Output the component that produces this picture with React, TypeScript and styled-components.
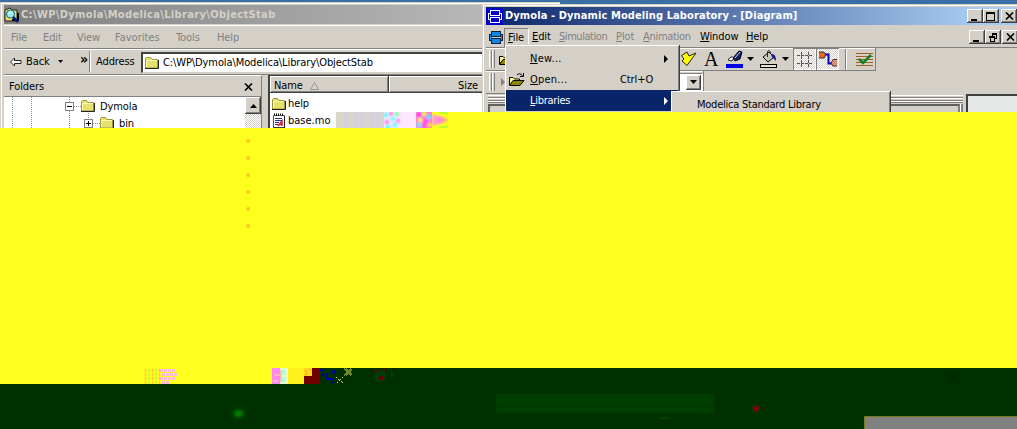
import React from 'react';
import styled, { createGlobalStyle, css } from 'styled-components';

const Global = createGlobalStyle`
  html, body { margin: 0; padding: 0; overflow: hidden; }
  * { box-sizing: border-box; }
  svg { display: block; flex: none; }
`;

const face = '#d4d0c8';
const raised = css`
  background: ${face};
  box-shadow: inset -1px -1px #404040, inset 1px 1px #fff, inset -2px -2px #808080;
`;

const Screen = styled.main`
  position: relative;
  width: 1017px;
  height: 429px;
  overflow: hidden;
  font: 11px/14px "DejaVu Sans Condensed", "DejaVu Sans", sans-serif;
  color: #000;
  display: flex;
  flex-direction: column;
`;
const Desktop = styled.section`
  position: relative;
  height: 128px;
  flex: none;
  background: #3a6ea5;
  overflow: hidden;
`;
const Label = styled.span<{ $w?: number; $ls?: number; $off?: boolean; $ml?: number }>`
  flex: none;
  white-space: pre;
  width: ${p => (p.$w ? p.$w + 'px' : 'auto')};
  margin-left: ${p => p.$ml ?? 0}px;
  letter-spacing: ${p => p.$ls ?? -0.1}px;
  color: ${p => (p.$off ? '#808080' : 'inherit')};
`;
const Key = styled.span`
  text-decoration: underline;
  text-underline-offset: 1px;
  text-decoration-thickness: 1px;
`;
const Spacer = styled.span<{ $w?: number }>`
  flex: ${p => (p.$w === undefined ? '1' : 'none')};
  width: ${p => p.$w ?? 0}px;
`;

/* Explorer window */
const Explorer = styled.div`
  position: absolute;
  left: 0;
  top: 2px;
  width: 560px;
  height: 140px;
  background: ${face};
  padding: 3px 4px 0;
  box-shadow: inset 1px 1px ${face}, inset 2px 2px #fff, inset -1px 0 #404040;
`;
const ExplorerTitle = styled.div`
  height: 19px;
  display: flex;
  align-items: center;
  background: linear-gradient(90deg, #808080, #c0c0c0);
  color: #d4d0c8;
  font-weight: 700;
`;
const ExplorerMenu = styled.div`
  margin-top: 1px;
  height: 24px;
  display: flex;
  align-items: center;
  padding: 2px 0 0 7px;
  border-top: 1px solid #fff;
  border-bottom: 1px solid #808080;
`;
const AddressBar = styled.div`
  height: 23px;
  display: flex;
  align-items: center;
  border-top: 1px solid #fff;
  padding: 1px 0 0 6px;
`;
const Chevron = styled.span`
  width: 14px;
  margin: -6px 0 0 17px;
  font-size: 14px;
  font-weight: 700;
`;
const AddressDivider = styled.i`
  width: 2px;
  height: 21px;
  margin-right: 3px;
  margin-left: -5px;
  border-left: 1px solid #808080;
  border-right: 1px solid #fff;
`;
const AddressField = styled.div`
  display: flex;
  align-items: center;
  flex: 1;
  height: 21px;
  margin-top: 1px;
  margin-left: 1px;
  padding-left: 1px;
  background: #fff;
  border: 1px solid #404040;
  border-width: 2px 0 1px 2px;
  border-bottom-color: #d4d0c8;
`;
const Panes = styled.div`
  display: flex;
  height: 60px;
  margin-top: 2px;
  border-top: 1px solid #808080;
`;
const FolderPane = styled.div`
  width: 258px;
  border-top: 1px solid #fff;
  border-right: 1px solid #808080;
`;
const FolderHead = styled.div`
  height: 21px;
  display: flex;
  align-items: center;
  padding: 1px 8px 0 5px;
  border-bottom: 1px solid #808080;
`;
const TreeArea = styled.div`
  display: flex;
  background: #fff;
  height: 36px;
`;
const Tree = styled.div`
  width: 241px;
`;
const Scroll = styled.div`
  flex: 1;
  background: repeating-conic-gradient(#fff 0 25%, ${face} 0 50%) 0 0 / 2px 2px;
`;
const ScrollButton = styled.div`
  ${raised}
  height: 17px;
  display: grid;
  place-items: center;
`;
const ListPane = styled.div`
  margin-left: 6px;
  flex: 1;
  background: #fff;
  border-left: 2px solid #404040;
  border-top: 1px solid #404040;
`;
const Columns = styled.div`
  display: flex;
  height: 17px;
  margin-bottom: 2px;
`;
const Column = styled.div<{ $w: number; $right?: boolean }>`
  ${raised}
  width: ${p => p.$w}px;
  display: flex;
  align-items: center;
  padding: 2px 7px 0 4px;
  justify-content: ${p => (p.$right ? 'flex-end' : 'flex-start')};
`;
const FileRow = styled.div`
  display: flex;
  align-items: center;
  height: 17px;
  padding-left: 1px;
  gap: 1px;
`;

/* Modeling application window */
const App2 = styled.div`
  position: absolute;
  left: 482px;
  top: 4px;
  width: 540px;
  height: 130px;
  background: ${face};
  padding: 3px 0 0 4px;
  box-shadow: inset 1px 1px ${face}, inset 2px 2px #fff;
`;
const AppTitle = styled.div`
  height: 18px;
  width: 531px;
  display: flex;
  align-items: center;
  background: linear-gradient(90deg, #0a246a, #a6caf0 92%);
  color: #fff;
  font-weight: 700;
`;
const WinButton = styled.span<{ $ml?: number }>`
  ${raised}
  width: 16px;
  height: 14px;
  margin-left: ${p => p.$ml ?? 0}px;
  display: grid;
  place-items: center;
  flex: none;
`;
const AppMenu = styled.div`
  height: 23px;
  width: 532px;
  display: flex;
  align-items: center;
  padding: 2px 0 0 1px;
  border-bottom: 1px solid #808080;
`;
const OpenMenuItem = styled.div`
  width: 25px;
  height: 19px;
  margin: 1px 3px 0 0;
  padding: 2px 0 0 3px;
  letter-spacing: -0.1px;
  border: 1px solid #808080;
  border-right-color: #fff;
`;
const ToolRow = styled.div<{ $w: number; $h: number }>`
  width: ${p => p.$w}px;
  height: ${p => p.$h}px;
  display: flex;
  align-items: center;
  padding-left: 3px;
  border: 1px solid #808080;
  border-width: 0 1px 1px 0;
  box-shadow: inset 0 1px #fff;
`;
const Grip = styled.i`
  width: 6px;
  height: 18px;
  flex: none;
  border: solid #808080;
  border-width: 0 1px 0 0;
  background: linear-gradient(90deg, #fff 1px, ${face} 1px 2px, #808080 2px 3px, #fff 3px 4px, ${face} 4px);
`;
const Toggle = styled.span`
  width: 23px;
  height: 22px;
  display: grid;
  place-items: center;
  background: repeating-conic-gradient(#fff 0 25%, ${face} 0 50%) 0 0 / 2px 2px;
  box-shadow: inset 1px 1px #808080, inset -1px -1px #fff;
`;
const ToolDivider = styled.i`
  width: 2px;
  height: 21px;
  margin: 0 9px 0 6px;
  border-left: 1px solid #808080;
  border-right: 1px solid #fff;
`;
const Combo = styled.span`
  width: 24px;
  height: 19px;
  background: #fff;
  display: flex;
  justify-content: flex-end;
  border: 1px solid #808080;
  border-color: #808080 #fff #fff;
  padding: 1px;
`;
const ComboButton = styled.span`
  ${raised}
  width: 15px;
  display: grid;
  place-items: center;
`;
const Docks = styled.div`
  display: flex;
  height: 30px;
`;
const Dock = styled.div`
  width: 477px;
  padding: 1px 0 0 2px;
`;
const DockGrip = styled.div`
  height: 8px;
  background: linear-gradient(#fff 1px, ${face} 1px 2px, #808080 2px 3px, #fff 3px 4px, ${face} 4px 5px, #808080 5px 6px, #fff 6px 7px, #808080 7px);
`;
const DockBody = styled.div`
  margin-top: 1px;
  width: 472px;
  height: 18px;
  border: 2px solid #606060;
  border-right-color: #808080;
  box-shadow: 1px 0 #fff, 3px 0 #808080;
`;
const Canvas = styled.div`
  flex: 1;
  margin-left: 3px;
  background: #e6e8e8;
  border: solid #404040;
  border-width: 2px 0 0 2px;
`;

const Menu = styled.div`
  position: absolute;
  left: 505px;
  top: 45px;
  width: 175px;
  height: 70px;
  padding: 3px 2px 0 1px;
  ${raised}
`;
const MenuItem = styled.div<{ $on?: boolean }>`
  height: 21px;
  display: flex;
  align-items: center;
  padding-left: 2px;
  background: ${p => (p.$on ? '#0a246a' : 'transparent')};
  color: ${p => (p.$on ? '#fff' : '#000')};
`;
const Submenu = styled.div`
  position: absolute;
  left: 671px;
  top: 91px;
  width: 220px;
  height: 30px;
  padding: 7px 0 0 26px;
  ${raised}
`;

/* Corrupted bands */
const YellowTongue = styled.div`
  position: absolute;
  left: 336px;
  right: 0;
  top: 112px;
  height: 16px;
  background: #ffff1e;
`;
const YellowBand = styled.section`
  height: 240px;
  flex: none;
  background: #ffff1e;
`;
const GreenBand = styled.section`
  height: 61px;
  flex: none;
  background: #003000;
`;

const Tri = ({ dir = 'down', color = '#000', s = 4 }: { dir?: 'down' | 'right' | 'up'; color?: string; s?: number }) => {
  const d = dir === 'down' ? `M0 0H${2 * s - 1}L${s - 0.5} ${s}Z` : dir === 'up' ? `M0 ${s}H${2 * s - 1}L${s - 0.5} 0Z` : `M0 0V${2 * s}L${s} ${s}Z`;
  return (
    <svg width={dir === 'right' ? s : 2 * s - 1} height={dir === 'right' ? 2 * s : s}>
      <path d={d} fill={color} />
    </svg>
  );
};

const Folder = () => (
  <svg width="16" height="14" viewBox="0 0 16 14">
    <path d="M1.5 12V2.5L2.5 1.5H6.5L8 3.5H13.5V12Z" fill="#e6e070" stroke="#9a9638" />
    <path d="M2.5 11V4.5H12.5" fill="none" stroke="#fffcb0" />
    <path d="M1 12.5H14.5V4" fill="none" stroke="#222" />
  </svg>
);
const SearchFolder = () => (
  <svg width="16" height="16" viewBox="0 0 16 16">
    <path d="M1 3L6 1L8 3H13V14H1Z" fill="#e8dc60" stroke="#222" />
    <path d="M8 13H14V6" stroke="#000" strokeWidth="2" fill="none" />
    <circle cx="6.5" cy="7" r="4" fill="#9eeaf4" stroke="#126a80" />
    <path d="M9 10L14 15" stroke="#001c80" strokeWidth="2.5" />
    <path d="M4.5 7L7 4.5" stroke="#fff" />
  </svg>
);
const FileIcon = () => (
  <svg width="15" height="16" viewBox="0 0 15 16">
    <path d="M2.500 2.500H13.500V14.500H2.500Z" fill="#fff" stroke="#555" />
    <path d="M3 1.500H13" stroke="#111" strokeWidth="2" strokeDasharray="1 1" />
    <path d="M2 15H14M13.500 3V15" stroke="#222" />
    <path d="M4 5.500H11M4 7.500H11M4 9.500H8M4 11.500H7" stroke="#2828a0" />
    <path d="M7 13L11 8V13M8.500 11.500H11" stroke="#d82038" strokeWidth="1.500" fill="none" />
  </svg>
);
const Box = ({ plus }: { plus?: boolean }) => (
  <svg width="9" height="9">
    <rect x=".5" y=".5" width="8" height="8" fill="#fff" stroke="#808080" />
    <path d={plus ? 'M2 4.500H7M4.500 2V7' : 'M2 4.500H7'} stroke="#000" />
  </svg>
);
const TreeLines = () => (
  <svg width="241" height="36">
    <g stroke="#909090" strokeDasharray="1 1" fill="none">
      <path d="M8.500 0V36M27.500 0V36M65.500 0V36M70 9.500H77M89 26.500H96M84.500 16V22" />
    </g>
    <g transform="translate(61 5)"><Box /></g>
    <g transform="translate(80 22)"><Box plus /></g>
    <g transform="translate(76 2)"><Folder /></g>
    <g transform="translate(95 19)"><Folder /></g>
  </svg>
);
const TreeText = styled.div`
  position: absolute;
  left: 100px;
  top: 100px;
  display: flex;
  flex-direction: column;
  gap: 3px;
`;
const AppLogo = ({ title }: { title?: boolean }) => (
  <svg width="17" height="17" viewBox="0 0 17 17" shapeRendering="crispEdges">
    {title && <rect width="17" height="17" fill="#0000c8" />}
    <path
      d="M4.500 2.500H13.500V7.500H4.500ZM4.500 9.500H13.500V14.500H4.500ZM4.500 5.500H2.500V11.500H4.500M13.500 5.500H15.500V11.500H13.500"
      fill={title ? '#0000c8' : '#1088e8'}
      stroke={title ? '#fff' : '#102040'}
    />
  </svg>
);
const BackArrow = () => (
  <svg width="12" height="10"><path d="M.5 5L4.500 1V3.500H11V6.500H4.500V9Z" fill="#fff" stroke="#222" /></svg>
);
const OpenIcon = () => (
  <svg width="18" height="16" viewBox="0 0 18 16">
    <path d="M1.500 13V5.500H5L6.500 7H11.500V9" fill="#ffff90" stroke="#000" />
    <path d="M1.500 13.500L5 8.500H16L12 13.500Z" fill="#8c8600" stroke="#000" />
    <path d="M9 3Q12 0 14.500 4M15.500 1V4.500H12" fill="none" stroke="#000" />
  </svg>
);
const Close = () => (
  <svg width="9" height="8"><path d="M1 0.500L8 7.500M8 0.500L1 7.500" stroke="#000" strokeWidth="1.600" /></svg>
);
const Minimize = () => (
  <svg width="10" height="9"><rect x="1" y="7" width="6" height="2" /></svg>
);
const Maximize = () => (
  <svg width="10" height="9" shapeRendering="crispEdges"><path d="M.5 1V8.500H8.500V1M0 1H9" fill="none" stroke="#000" /><rect width="9" height="2" /></svg>
);
const Restore = () => (
  <svg width="9" height="9" shapeRendering="crispEdges"><path d="M3.500 3V1H7.500V5.500H6M1 4V8.500H5.500V4M3 1H8M0 4H6" fill="none" stroke="#000" /><path d="M3 0H8V2H3ZM0 3H6V5H0Z" /></svg>
);
const PolygonIcon = () => (
  <svg width="18" height="18"><path d="M1.500 5.500L7 2L9 6L16 3L7 15.500L2 11L4 9Z" fill="#ffff00" stroke="#222" /></svg>
);
const Letter = styled.span`
  font: 20px/20px "Liberation Serif", serif;
  width: 16px;
  margin: 0 6px 0 6px;
  flex: none;
`;
const PenIcon = () => (
  <svg width="18" height="18">
    <path d="M2 10Q5 5 8 8L6 11Z" fill="#fff" stroke="#222" />
    <path d="M7 8L13 1L16 2L14 9L9 11Z" fill="#101c70" stroke="#000" /><path d="M9 8L14 2" stroke="#ddd" />
    <rect y="14" width="17" height="4" fill="#0000f0" />
  </svg>
);
const BucketIcon = () => (
  <svg width="18" height="18">
    <path d="M3 7L9 2L14 7L8 12Z" fill="#c8c8c0" stroke="#000" /><path d="M7.500 7V1.500Q9.500-1 10.500 3" fill="none" stroke="#222" />
    <path d="M11 4Q16 3 16 11L12 7Z" fill="#101c80" />
    <rect x=".5" y="14.500" width="16" height="3" fill="#e4e0d8" stroke="#000" />
  </svg>
);
const GridIcon = () => (
  <svg width="17" height="17"><path d="M5.500 1V16M12.500 1V16M1 4.500H16M1 12.500H16" stroke="#555" strokeDasharray="3 1" /></svg>
);
const ConnectIcon = () => (
  <svg width="20" height="18">
    <path d="M1 2H6L8 5L6 8H1" fill="#e86820" stroke="#333" /><path d="M7 4.500H10.500V13.500H14" fill="none" stroke="#0000c0" strokeWidth="2" />
    <path d="M19 9.500H15L13 13L15 16H19" fill="#d89078" stroke="#522" />
  </svg>
);
const CheckIcon = () => (
  <svg width="18" height="15">
    <path d="M0 1.500H17M0 4.500H17M0 7.500H17M0 10.500H17M0 13.500H17" stroke="#a06020" /><path d="M3 7L7 11L15 3" fill="none" stroke="#108020" strokeWidth="2.500" />
  </svg>
);

const TopNoise = () => (
  <svg width="112" height="16" viewBox="0 0 112 16">
    <defs>
      <filter id="soft" x="0" y="0" width="1" height="1"><feGaussianBlur stdDeviation=".9" /></filter>
      <linearGradient id="warm"><stop stopColor="#ffa8d8" /><stop offset=".5" stopColor="#ff80e8" /><stop offset="1" stopColor="#ffc060" /></linearGradient>
    </defs>
    <rect width="48" height="16" fill="#d8d6c8" />
    {[7, 17, 24, 33, 40].map(x => <rect key={x} x={x} width="5" height="16" fill="#d4d0de" />)}
    <rect x="48" width="16" height="16" fill="#f4e8ff" />
    <rect x="64" width="16" height="16" fill="#ffe8ff" />
    <rect x="80" width="16" height="16" fill="#ff80e0" />
    <g filter="url(#soft)">
      {[[48, 1, '#50ffff'], [55, 5, '#60ffff'], [59, 0, '#80ffa0'], [49, 8, '#ff80e8'], [57, 11, '#60ffff'], [50, 13, '#50ffff'], [60, 7, '#ff90f0'], [53, 0, '#ff90e0'],
        [81, 1, '#ff40e0'], [86, 0, '#f0ff20'], [91, 3, '#40f0ff'], [82, 6, '#ffff50'], [88, 7, '#ff40f0'], [81, 11, '#50ffff'], [86, 12, '#ff50e0'], [92, 11, '#ffe020']].map(([x, y, c], i) => (
        <rect key={i} x={x as number} y={y as number} width="4" height="4" fill={c as string} />
      ))}
    </g>
    <rect x="96" width="16" height="16" fill="#ffff1e" />
    <path d="M96 2L112 7V9L96 14Z" fill="url(#warm)" filter="url(#soft)" />
    <path d="M103 1H112M103 15H112" stroke="#b8ff30" strokeWidth="2" />
  </svg>
);
const Smudges = () => (
  <svg width="10" height="120">
    {[13, 30, 47, 64, 81, 98].map(y => <path key={y} d={`M7 ${y - 2}H10V${y + 2}H7L6 ${y}Z`} fill="#ffcd22" />)}
  </svg>
);
const SmudgeSlot = styled.div`
  padding-left: 240px;
`;
const BottomNoise = () => (
  <svg width="1017" height="61" viewBox="0 0 1017 61">
    <defs>
      <filter id="glow" x="-1" y="-1" width="3" height="3"><feGaussianBlur stdDeviation="1.600" /></filter>
      <filter id="fine"><feGaussianBlur stdDeviation=".5" /></filter>
    </defs>
    <rect width="304" height="16" fill="#ffff1e" />
    <g filter="url(#fine)">
      {Array.from({ length: 5 }, (_, i) => <path key={i} d={`M${145.500 + i * 3.500} 1V16`} stroke={i % 2 ? '#c8f040' : '#ffc838'} strokeWidth="1.500" strokeDasharray="3 1" />)}
      {Array.from({ length: 14 }, (_, i) => <rect key={i} x={160 + (i % 4) * 4 + (i % 8 > 3 ? 2 : 0)} y={1 + Math.floor(i / 4) * 4} width="3" height="3" fill="#ffb8d8" />)}
      <rect x="272" width="8" height="16" fill="#ff88f0" />
      <rect x="280" width="8" height="16" fill="#e8ffc8" />
      <path d="M275 7H280M273 13H278M281 2V14" stroke="#ffc0b0" strokeWidth="2" />
      <path d="M284 2V14" stroke="#a0fff0" strokeWidth="3" strokeDasharray="5 2" />
    </g>
    <rect x="288" width="16" height="16" fill="#fff01e" />
    <rect x="304" width="8" height="8" fill="#ffd51e" />
    <path d="M305 2L307 4M309 1L311 3M305 7L308 5" stroke="#ff9418" />
    <path d="M312 0H320V16H304V8H312Z" fill="#700000" />
    <g fill="#0000a0" filter="url(#fine)">
      <rect x="321" y="6" width="3" height="2" /><rect x="326" y="5" width="2" height="7" /><rect x="328" y="10" width="5" height="2" />
      <circle cx="334" cy="4" r="2" /><rect x="320" y="1" width="4" height="2" /><rect x="331" y="13" width="3" height="2" />
    </g>
    <g fill="#e0e050">
      {Array.from({ length: 56 }, (_, i) => [i % 8, Math.floor(i / 8)])
        .filter(([x, y]) => (x + y) % 2 === 0 && Math.abs(Math.abs(x - 3.5) - Math.abs(y - 3)) < 2)
        .map(([x, y]) => <rect key={`${x}-${y}`} x={344 + x} y={y + 0.5} width="1" height="1" />)}
      {[[336, 9], [338, 11], [340, 11], [342, 9], [339, 12], [337, 14], [341, 13], [342, 14]].map(([x, y]) => <rect key={`${x}-${y}`} x={x} y={y} width="1" height="1" />)}
    </g>
    <g fill="#003c10" filter="url(#fine)"><rect x="375" y="2" width="10" height="11" /><rect x="391" y="4" width="3" height="5" /></g>
    <g fill="#680000" filter="url(#fine)"><circle cx="381" cy="10" r="2.500" /><circle cx="376" cy="3" r="1.500" /><circle cx="384" cy="2" r="1.500" /></g>
    <circle cx="238.500" cy="45" r="9" fill="#003400" filter="url(#glow)" />
    <ellipse cx="238.500" cy="45.500" rx="4.500" ry="3.500" fill="#008000" filter="url(#glow)" />
    <g filter="url(#fine)">
      <rect x="496" y="26" width="218" height="20" fill="#003b00" />
      <rect x="498" y="31" width="214" height="3" fill="#003f00" /><rect x="498" y="40" width="214" height="3" fill="#003f00" />
    </g>
    <ellipse cx="665" cy="50" rx="6" ry="1.500" fill="#004200" />
    <circle cx="756" cy="40.500" r="4" fill="#0a400a" filter="url(#glow)" />
    <circle cx="756" cy="40.500" r="3" fill="#800000" filter="url(#fine)" />
    <circle cx="953" cy="10" r="5" fill="#002800" filter="url(#glow)" />
    <rect x="864.500" y="48.500" width="160" height="20" fill="#808080" stroke="#78781e" />
  </svg>
);

export default function App() {
  return (
    <Screen>
      <Global />
      <Desktop>
        <Explorer>
          <ExplorerTitle>
            <SearchFolder />
            <Label $ml={1} $ls={0.35}>C:\WP\Dymola\Modelica\Library\ObjectStab</Label>
          </ExplorerTitle>
          <ExplorerMenu>
            <Label $off $w={32}>File</Label>
            <Label $off $w={34}>Edit</Label>
            <Label $off $w={38}>View</Label>
            <Label $off $ls={0} $w={61}>Favorites</Label>
            <Label $off $w={41}>Tools</Label>
            <Label $off>Help</Label>
          </ExplorerMenu>
          <AddressBar>
            <BackArrow />
            <Label $ml={4} $w={32}>Back</Label>
            <Tri s={3} />
            <Chevron>»</Chevron>
            <AddressDivider />
            <Label $w={44} $ml={2}>Address</Label>
            <AddressField>
              <Folder />
              <Label $ml={3}>C:\WP\Dymola\Modelica\Library\ObjectStab</Label>
            </AddressField>
          </AddressBar>
          <Panes>
            <FolderPane>
              <FolderHead><Label>Folders</Label><Spacer /><Close /></FolderHead>
              <TreeArea>
                <Tree><TreeLines /></Tree>
                <Scroll><ScrollButton><Tri dir="up" /></ScrollButton></Scroll>
              </TreeArea>
            </FolderPane>
            <ListPane>
              <Columns>
                <Column $w={119}>
                  <Label $w={36}>Name</Label>
                  <svg width="9" height="8"><path d="M.5 7.500L4.500.5L8.500 7.500Z" fill="#d4d0c8" stroke="#999" /></svg>
                </Column>
                <Column $w={96} $right><Label>Size</Label></Column>
              </Columns>
              <FileRow><Folder /><Label>help</Label></FileRow>
              <FileRow><FileIcon /><Label $ml={1} $ls={0}>base.mo</Label></FileRow>
            </ListPane>
          </Panes>
        </Explorer>
        <TreeText><Label>Dymola</Label><Label $ml={19}>bin</Label></TreeText>

        <App2>
          <AppTitle>
            <AppLogo title />
            <Label $ml={2} $ls={0.1}>Dymola - Dynamic Modeling Laboratory - [Diagram]</Label>
            <Spacer />
            <WinButton><Minimize /></WinButton>
            <WinButton><Maximize /></WinButton>
            <WinButton $ml={2}><Close /></WinButton>
          </AppTitle>
          <AppMenu>
            <AppLogo />
            <OpenMenuItem><Key>F</Key>ile</OpenMenuItem>
            <Label $w={27}><Key>E</Key>dit</Label>
            <Label $off $ls={-0.45} $w={57}><Key>S</Key>imulation</Label>
            <Label $off $w={27}><Key>P</Key>lot</Label>
            <Label $off $ls={-0.3} $w={57}><Key>A</Key>nimation</Label>
            <Label $w={46}><Key>W</Key>indow</Label>
            <Label><Key>H</Key>elp</Label>
            <Spacer />
            <WinButton><Minimize /></WinButton>
            <WinButton><Restore /></WinButton>
            <WinButton $ml={1}><Close /></WinButton>
          </AppMenu>
          <ToolRow $w={390} $h={23}>
            <Grip />
            <Spacer $w={3} />
            <OpenIcon />
            <Spacer $w={164} />
            <PolygonIcon />
            <Letter>A</Letter>
            <PenIcon />
            <Spacer $w={3} /><Tri />
            <Spacer $w={6} />
            <BucketIcon />
            <Spacer $w={4} /><Tri />
            <Spacer $w={4} />
            <Toggle><GridIcon /></Toggle>
            <Toggle><ConnectIcon /></Toggle>
            <ToolDivider />
            <CheckIcon />
          </ToolRow>
          <ToolRow $w={218} $h={23}>
            <Grip />
            <Spacer $w={6} />
            <Tri dir="right" color="#808080" />
            <Spacer />
            <Combo><ComboButton><Tri /></ComboButton></Combo>
          </ToolRow>
          <Docks>
            <Dock><DockGrip /><DockBody /></Dock>
            <Canvas />
          </Docks>
        </App2>

        <Menu>
          <MenuItem><Spacer $w={22} /><Label $ls={0.3}><Key>N</Key>ew...</Label><Spacer /><Tri dir="right" /><Spacer $w={10} /></MenuItem>
          <MenuItem><OpenIcon /><Spacer $w={4} /><Label $ls={0.2} $w={90}><Key>O</Key>pen...</Label><Label>Ctrl+O</Label></MenuItem>
          <MenuItem $on><Spacer $w={22} /><Label $ls={-0.3}><Key>L</Key>ibraries</Label><Spacer /><Tri dir="right" color="#fff" /><Spacer $w={10} /></MenuItem>
        </Menu>
        <Submenu><Label $ls={-0.24}>Modelica Standard Library</Label></Submenu>
        <YellowTongue><TopNoise /></YellowTongue>
      </Desktop>
      <YellowBand><SmudgeSlot><Smudges /></SmudgeSlot></YellowBand>
      <GreenBand><BottomNoise /></GreenBand>
    </Screen>
  );
}
